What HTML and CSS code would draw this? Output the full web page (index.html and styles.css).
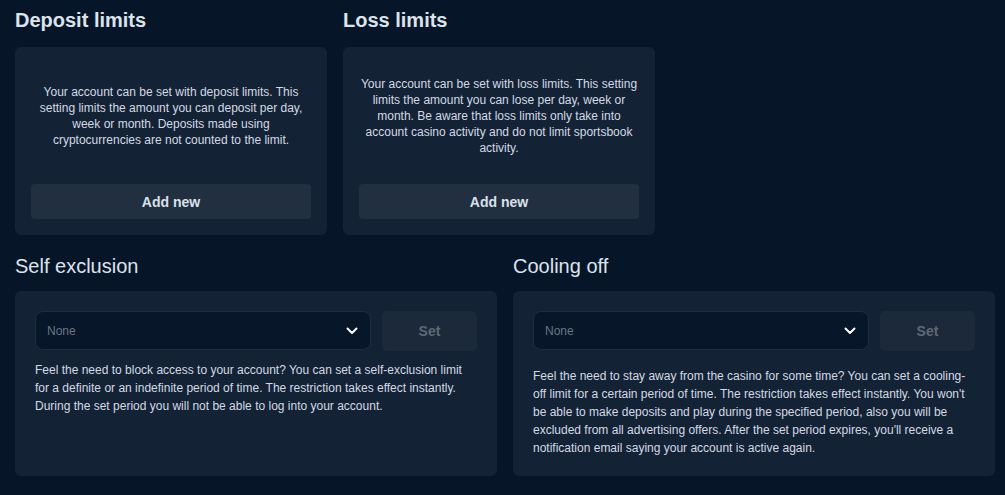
FILE: index.html
```html
<!DOCTYPE html>
<html>
<head>
    <title>Responsible gaming</title>
    <link rel="stylesheet" href="styles.css">
</head>
<body>
    <div class="limits-row">
        <div class="limit-col">
            <h2 class="title">Deposit limits</h2>
            <div class="limit-card">
                <div class="limit-text">Your account can be set with deposit limits. This setting limits the amount you can deposit per day, week or month. Deposits made using cryptocurrencies are not counted to the limit.</div>
                <button class="add-btn">Add new</button>
            </div>
        </div>
        <div class="limit-col">
            <h2 class="title">Loss limits</h2>
            <div class="limit-card">
                <div class="limit-text">Your account can be set with loss limits. This setting limits the amount you can lose per day, week or month. Be aware that loss limits only take into account casino activity and do not limit sportsbook activity.</div>
                <button class="add-btn">Add new</button>
            </div>
        </div>
    </div>

    <div class="period-row">
        <div class="period-col">
            <h2 class="title title-light">Self exclusion</h2>
            <div class="period-card">
                <div class="period-controls">
                    <div class="select">
                        <span>None</span>
                        <svg class="chevron" width="12" height="8" viewBox="0 0 12 8"><path d="M1.5 1.5 L6 6 L10.5 1.5" fill="none" stroke="#ffffff" stroke-width="2" stroke-linecap="round" stroke-linejoin="round"/></svg>
                    </div>
                    <button class="set-btn">Set</button>
                </div>
                <p class="period-text">Feel the need to block access to your account? You can set a self-exclusion limit for a definite or an indefinite period of time. The restriction takes effect instantly. During the set period you will not be able to log into your account.</p>
            </div>
        </div>
        <div class="period-col">
            <h2 class="title title-light">Cooling off</h2>
            <div class="period-card">
                <div class="period-controls">
                    <div class="select">
                        <span>None</span>
                        <svg class="chevron" width="12" height="8" viewBox="0 0 12 8"><path d="M1.5 1.5 L6 6 L10.5 1.5" fill="none" stroke="#ffffff" stroke-width="2" stroke-linecap="round" stroke-linejoin="round"/></svg>
                    </div>
                    <button class="set-btn">Set</button>
                </div>
                <p class="period-text period-text-low">Feel the need to stay away from the casino for some time? You can set a cooling-off limit for a certain period of time. The restriction takes effect instantly. You won't be able to make deposits and play during the specified period, also you will be excluded from all advertising offers. After the set period expires, you'll receive a notification email saying your account is active again.</p>
            </div>
        </div>
    </div>
</body>
</html>
```

FILE: styles.css
```css
body {
    margin: 0;
    padding: 8px 10px 0 15px;
    background: #061528;
    font-family: "Liberation Sans", Arial, sans-serif;
    color: #d3dae4;
}
.title {
    margin: 0 0 15px;
    font-size: 20px;
    line-height: 24px;
    font-weight: bold;
    color: #dde3ec;
}
.title-light {
    font-weight: normal;
}
.limits-row {
    display: flex;
    gap: 16px;
}
.limit-col {
    width: 312px;
}
.limit-card {
    background: #142236;
    border-radius: 6px;
    height: 188px;
    padding: 16px;
    box-sizing: border-box;
    display: flex;
    flex-direction: column;
}
.limit-text {
    flex: 1;
    display: flex;
    align-items: center;
    justify-content: center;
    text-align: center;
    font-size: 12px;
    line-height: 16px;
    padding: 0 0 16px;
}
.add-btn {
    height: 35px;
    border: none;
    border-radius: 4px;
    background: #212f40;
    color: #dbe1ea;
    font-family: inherit;
    font-size: 14px;
    font-weight: bold;
    cursor: pointer;
}
.period-row {
    display: flex;
    gap: 16px;
    margin-top: 19px;
}
.period-col {
    width: 482px;
}
.period-row .title {
    margin-bottom: 13px;
}
.period-card {
    background: #142236;
    border-radius: 6px;
    height: 185px;
    padding: 20px;
    box-sizing: border-box;
}
.period-controls {
    display: flex;
    gap: 11px;
}
.select {
    flex: 1;
    height: 39px;
    box-sizing: border-box;
    border: 1px solid #1f2d40;
    border-radius: 8px;
    background: #071629;
    display: flex;
    align-items: center;
    justify-content: space-between;
    padding: 0 12px 0 11px;
    font-size: 12px;
    color: #6a7585;
}
.set-btn {
    width: 95px;
    height: 40px;
    border: none;
    border-radius: 5px;
    background: #1c293a;
    color: #5e6876;
    font-family: inherit;
    font-size: 14px;
    font-weight: bold;
}
.period-text {
    margin: 10px 0 0;
    font-size: 12px;
    line-height: 18px;
    color: #d3dae4;
}
.period-text-low {
    margin-top: 16px;
}
```
